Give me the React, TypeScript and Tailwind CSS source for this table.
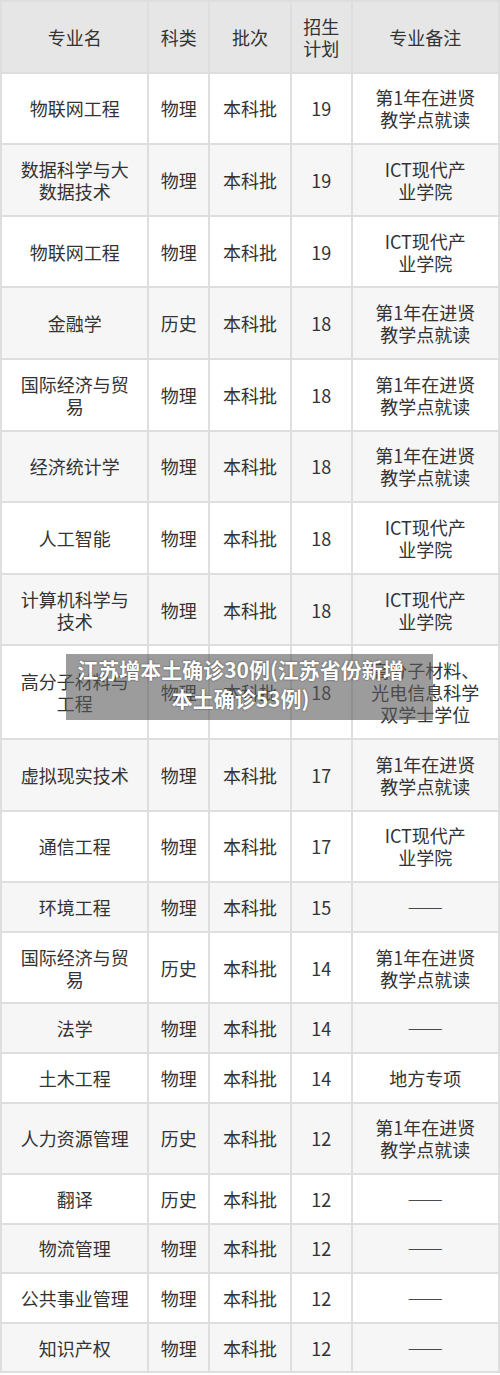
const rows: { name: string[]; type: string; batch: string; plan: string; note: string[] }[] = [
  { name: ["物联网工程"], type: "物理", batch: "本科批", plan: "19", note: ["第1年在进贤", "教学点就读"] },
  { name: ["数据科学与大", "数据技术"], type: "物理", batch: "本科批", plan: "19", note: ["ICT现代产", "业学院"] },
  { name: ["物联网工程"], type: "物理", batch: "本科批", plan: "19", note: ["ICT现代产", "业学院"] },
  { name: ["金融学"], type: "历史", batch: "本科批", plan: "18", note: ["第1年在进贤", "教学点就读"] },
  { name: ["国际经济与贸", "易"], type: "物理", batch: "本科批", plan: "18", note: ["第1年在进贤", "教学点就读"] },
  { name: ["经济统计学"], type: "物理", batch: "本科批", plan: "18", note: ["第1年在进贤", "教学点就读"] },
  { name: ["人工智能"], type: "物理", batch: "本科批", plan: "18", note: ["ICT现代产", "业学院"] },
  { name: ["计算机科学与", "技术"], type: "物理", batch: "本科批", plan: "18", note: ["ICT现代产", "业学院"] },
  { name: ["高分子材料与", "工程"], type: "物理", batch: "本科批", plan: "18", note: ["高分子材料、", "光电信息科学", "双学士学位"] },
  { name: ["虚拟现实技术"], type: "物理", batch: "本科批", plan: "17", note: ["第1年在进贤", "教学点就读"] },
  { name: ["通信工程"], type: "物理", batch: "本科批", plan: "17", note: ["ICT现代产", "业学院"] },
  { name: ["环境工程"], type: "物理", batch: "本科批", plan: "15", note: ["——"] },
  { name: ["国际经济与贸", "易"], type: "历史", batch: "本科批", plan: "14", note: ["第1年在进贤", "教学点就读"] },
  { name: ["法学"], type: "物理", batch: "本科批", plan: "14", note: ["——"] },
  { name: ["土木工程"], type: "物理", batch: "本科批", plan: "14", note: ["地方专项"] },
  { name: ["人力资源管理"], type: "历史", batch: "本科批", plan: "12", note: ["第1年在进贤", "教学点就读"] },
  { name: ["翻译"], type: "历史", batch: "本科批", plan: "12", note: ["——"] },
  { name: ["物流管理"], type: "物理", batch: "本科批", plan: "12", note: ["——"] },
  { name: ["公共事业管理"], type: "物理", batch: "本科批", plan: "12", note: ["——"] },
  { name: ["知识产权"], type: "物理", batch: "本科批", plan: "12", note: ["——"] },
];

const Lines = ({ lines }: { lines: string[] }) => (
  <>
    {lines.map((l, i) => (
      <div
        key={i}
        className={l === "——" ? "font-bold text-[#222] [font-feature-settings:'fwid']" : ""}
      >
        {l}
      </div>
    ))}
  </>
);

const cell = "border-2 border-[#dedede] px-1 py-[12.8px] text-center align-middle";

const App = () => {
  return (
    <div
      lang="zh-CN"
      className="relative w-[500px] bg-white font-['Noto_Sans_CJK_SC','Noto_Sans',sans-serif] text-[18px] leading-[22px] text-[#333]"
    >
      <table className="w-full border-collapse border-2 border-[#dedede]">
        <colgroup>
          <col className="w-[148px]" />
          <col className="w-[61px]" />
          <col className="w-[82px]" />
          <col className="w-[61px]" />
          <col className="w-[148px]" />
        </colgroup>
        <thead>
          <tr className="bg-[#e6e6e6]">
            <th className={`${cell} font-normal`}>专业名</th>
            <th className={`${cell} font-normal`}>科类</th>
            <th className={`${cell} font-normal`}>批次</th>
            <th className={`${cell} font-normal`}>
              <Lines lines={["招生", "计划"]} />
            </th>
            <th className={`${cell} font-normal`}>专业备注</th>
          </tr>
        </thead>
        <tbody>
          {rows.map((r, i) => (
            <tr key={i} className={i % 2 === 0 ? "bg-white" : "bg-[#f6f6f6]"}>
              <td className={cell}>
                <Lines lines={r.name} />
              </td>
              <td className={cell}>{r.type}</td>
              <td className={cell}>{r.batch}</td>
              <td className={cell}>{r.plan}</td>
              <td className={cell}>
                <Lines lines={r.note} />
              </td>
            </tr>
          ))}
        </tbody>
      </table>

      {/* watermark caption over the table */}
      <div className="absolute left-[66px] top-[654px] flex h-[66px] w-[367px] flex-col items-center justify-center pr-[18px] pb-[6px] bg-[rgba(90,90,90,0.6)] text-[21px] font-bold leading-[29px] text-white [text-shadow:0_0_2px_rgba(0,0,0,0.6)]">
        <div>江苏增本土确诊30例(江苏省份新增</div>
        <div>本土确诊53例)</div>
      </div>
    </div>
  );
};

export default App;
